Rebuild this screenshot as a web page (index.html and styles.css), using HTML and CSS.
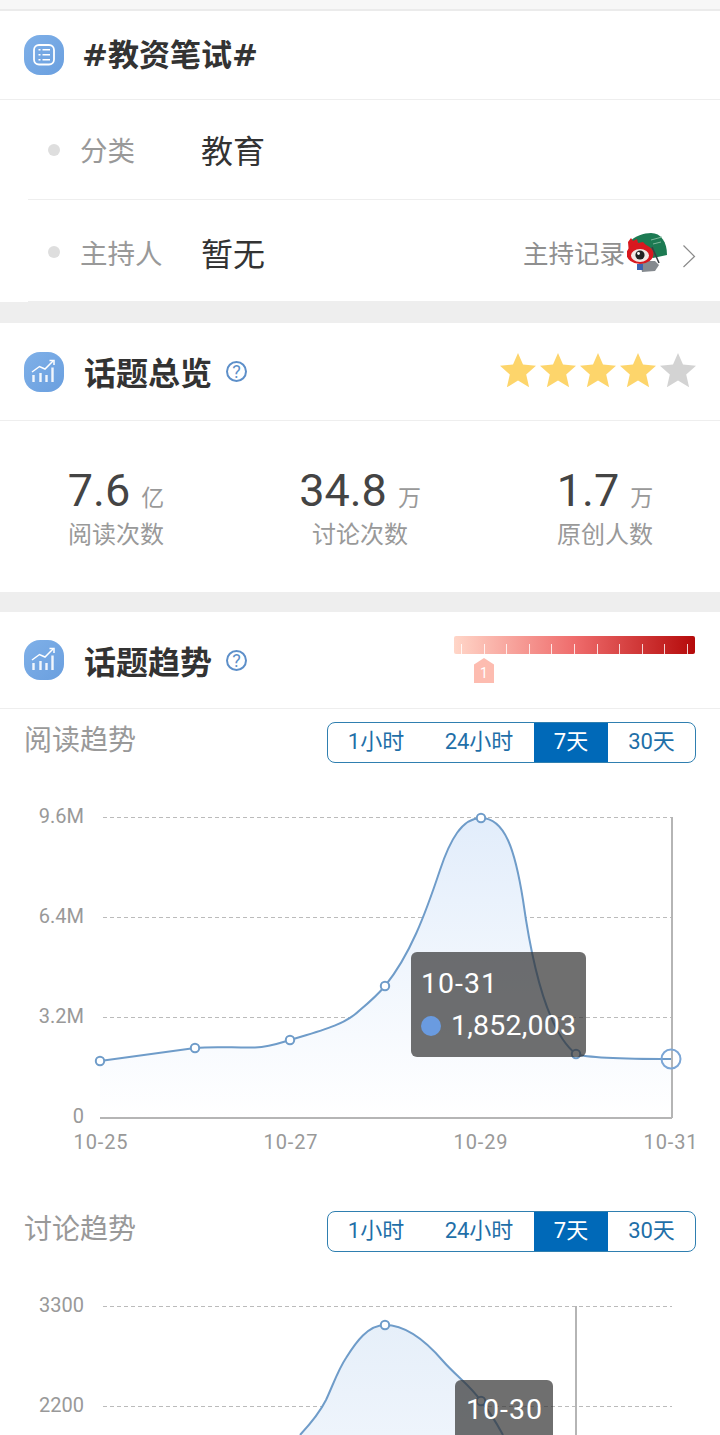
FILE: index.html
```html
<!DOCTYPE html>
<html lang="zh-CN">
<head>
    <meta charset="UTF-8">
    <meta name="viewport" content="width=device-width, initial-scale=1.0">
    <title>#教资笔试#</title>
    <link rel="stylesheet" href="styles.css">
</head>
<body>
    <div class="page">
        <div class="top-strip"></div>

        <div class="section-head topic-head">
            <span class="head-icon">
                <svg viewBox="0 0 40 40" width="40" height="40">
                    <rect x="10" y="10" width="20" height="19.500" rx="5" fill="none" stroke="#fff" stroke-width="1.800"/>
                    <path d="M14.500 14.800h2M14.500 19.800h2M14.500 24.800h2M18.500 14.800h7.500M18.500 19.800h7.500M18.500 24.800h7.500" stroke="#fff" stroke-width="1.600" fill="none"/>
                </svg>
            </span>
            <h1 class="topic-title">#教资笔试#</h1>
        </div>

        <div class="info-row row-first">
            <span class="dot"></span>
            <span class="info-label">分类</span>
            <span class="info-value">教育</span>
        </div>
        <div class="info-row row-second">
            <span class="dot"></span>
            <span class="info-label">主持人</span>
            <span class="info-value">暂无</span>
            <span class="host-log">主持记录</span>
            <svg class="avatar" viewBox="0 0 40 40" width="40" height="40">
                <path d="M2 9C8 3 17 0 24 0c10 0 16 9 16 22l-14 3z" fill="#1c7a52"/>
                <path d="M24 7l11-3M26 11l8-2" stroke="#7fb89c" stroke-width="1" fill="none"/>
                <path d="M25 14l7 16" stroke="#3a3f44" stroke-width="1.500" fill="none"/>
                <path d="M13 28l15 0 4 4-4 6-13 1z" fill="#858a8f"/>
                <path d="M10 31h6v6h-6z" fill="#3c62b0"/>
                <path d="M1 9l3-4 2 3 4-2 1 4 5-1 6 6-8 6H2z" fill="#d8181f"/>
                <ellipse cx="13" cy="21" rx="13.500" ry="10" fill="#d8181f"/>
                <ellipse cx="13" cy="22.500" rx="9" ry="6.500" fill="#f3e9e6"/>
                <circle cx="13" cy="22" r="4.600" fill="#222"/>
                <circle cx="11.500" cy="20.500" r="1.400" fill="#fff"/>
            </svg>
            <svg class="chevron" viewBox="0 0 14 24" width="14" height="24">
                <path d="M1.500 1.500L12.500 12.500 1.500 23" fill="none" stroke="#8a8a8a" stroke-width="1.200"/>
            </svg>
        </div>

        <div class="band band-info"></div>

        <div class="section-head overview-head">
            <span class="head-icon">
                <svg viewBox="0 0 40 40" width="40" height="40">
                    <path d="M8 20l7.500-5.500L21 17l8-8" fill="none" stroke="#fff" stroke-width="1.500"/>
                    <path d="M25.500 8.500H30V13" fill="none" stroke="#fff" stroke-width="1.500"/>
                    <path d="M9.500 23v7M16.500 21v9M22.500 23v7M28.500 15.500V30" stroke="#fff" stroke-width="2.400" opacity=".9"/>
                </svg>
            </span>
            <h2 class="section-title">话题总览</h2>
            <span class="help">?</span>
            <div class="stars">
                <svg viewBox="0 0 196 40" width="196" height="40">
                    <defs>
                        <path id="star" d="M18 1l5 11.500 13 1.300-9.800 8.700 2.900 12.800L18 28.600 6.900 35.300l2.900-12.800L0 13.800l13-1.300z"/>
                    </defs>
                    <use href="#star" x="0" y="0" fill="#fdd56b"/>
                    <use href="#star" x="40" y="0" fill="#fdd56b"/>
                    <use href="#star" x="80" y="0" fill="#fdd56b"/>
                    <use href="#star" x="120" y="0" fill="#fdd56b"/>
                    <use href="#star" x="160" y="0" fill="#d3d3d3"/>
                </svg>
            </div>
        </div>

        <div class="stats">
            <div class="stat stat-read">
                <div class="stat-num">7.6<span class="stat-unit">亿</span></div>
                <div class="stat-name">阅读次数</div>
            </div>
            <div class="stat stat-talk">
                <div class="stat-num">34.8<span class="stat-unit">万</span></div>
                <div class="stat-name">讨论次数</div>
            </div>
            <div class="stat stat-user">
                <div class="stat-num">1.7<span class="stat-unit">万</span></div>
                <div class="stat-name">原创人数</div>
            </div>
        </div>

        <div class="band"></div>

        <div class="section-head trend-head">
            <span class="head-icon">
                <svg viewBox="0 0 40 40" width="40" height="40">
                    <path d="M8 20l7.500-5.500L21 17l8-8" fill="none" stroke="#fff" stroke-width="1.500"/>
                    <path d="M25.500 8.500H30V13" fill="none" stroke="#fff" stroke-width="1.500"/>
                    <path d="M9.500 23v7M16.500 21v9M22.500 23v7M28.500 15.500V30" stroke="#fff" stroke-width="2.400" opacity=".9"/>
                </svg>
            </span>
            <h2 class="section-title">话题趋势</h2>
            <span class="help">?</span>
            <div class="heat">
                <div class="heat-bar">
                    <i></i><i></i><i></i><i></i><i></i><i></i><i></i><i></i><i></i><i></i><i></i>
                </div>
                <div class="heat-tag">1</div>
            </div>
        </div>

        <div class="chart-head">
            <span class="chart-title">阅读趋势</span>
            <div class="segment">
                <span class="seg seg-1h">1小时</span>
                <span class="seg seg-24h">24小时</span>
                <span class="seg seg-7d on">7天</span>
                <span class="seg seg-30d">30天</span>
            </div>
        </div>

        <div class="chart chart-read">
            <svg viewBox="0 770 720 400" width="720" height="400">
                <defs>
                    <linearGradient id="fillRead" x1="0" y1="0" x2="0" y2="1">
                        <stop offset="0" stop-color="#e2edfb"/>
                        <stop offset="1" stop-color="#ffffff"/>
                    </linearGradient>
                </defs>
                <g class="grid">
                    <line x1="103" y1="817.500" x2="672" y2="817.500"/>
                    <line x1="103" y1="917.500" x2="672" y2="917.500"/>
                    <line x1="103" y1="1017.500" x2="672" y2="1017.500"/>
                </g>
                <path fill="url(#fillRead)" d="M100 1061L195 1048C215 1046 235 1048 255 1047.500C270 1047 280 1043 290 1040C320 1031 345 1025 360 1010C372 1000 380 992 385 986C410 955 425 915 440 870C450 840 462 818 481 818C505 818 515 850 523 900C530 950 545 1030 576 1054C590 1059 640 1059 671 1059L671 1118L100 1118Z"/>
                <line class="axis" x1="100" y1="1118" x2="672" y2="1118"/>
                <line class="axis" x1="672" y1="817" x2="672" y2="1118"/>
                <path class="curve" d="M100 1061L195 1048C215 1046 235 1048 255 1047.500C270 1047 280 1043 290 1040C320 1031 345 1025 360 1010C372 1000 380 992 385 986C410 955 425 915 440 870C450 840 462 818 481 818C505 818 515 850 523 900C530 950 545 1030 576 1054C590 1059 640 1059 671 1059"/>
                <circle class="pt" cx="100" cy="1061" r="4.200"/>
                <circle class="pt" cx="195" cy="1048" r="4.200"/>
                <circle class="pt" cx="290" cy="1040" r="4.200"/>
                <circle class="pt" cx="385" cy="986" r="4.200"/>
                <circle class="pt" cx="481" cy="818" r="4.200"/>
                <circle class="pt" cx="576" cy="1054" r="4.200"/>
                <circle class="pt pt-big" cx="671" cy="1059" r="9.500"/>
                <g class="ylabels">
                    <text x="84" y="823">9.6M</text>
                    <text x="84" y="923">6.4M</text>
                    <text x="84" y="1023">3.2M</text>
                    <text x="84" y="1123">0</text>
                </g>
                <g class="xlabels">
                    <text x="101" y="1149">10-25</text>
                    <text x="291" y="1149">10-27</text>
                    <text x="481" y="1149">10-29</text>
                    <text x="671" y="1149">10-31</text>
                </g>
            </svg>
            <div class="tip tip-read">
                <div class="tip-date">10-31</div>
                <div class="tip-value"><span class="tip-dot"></span>1,852,003</div>
            </div>
        </div>

        <div class="chart-head">
            <span class="chart-title">讨论趋势</span>
            <div class="segment">
                <span class="seg seg-1h">1小时</span>
                <span class="seg seg-24h">24小时</span>
                <span class="seg seg-7d on">7天</span>
                <span class="seg seg-30d">30天</span>
            </div>
        </div>

        <div class="chart chart-talk">
            <svg viewBox="0 1259 720 176" width="720" height="176">
                <defs>
                    <linearGradient id="fillTalk" x1="0" y1="0" x2="0" y2="1">
                        <stop offset="0" stop-color="#e6eff9"/>
                        <stop offset="1" stop-color="#eef4fc"/>
                    </linearGradient>
                </defs>
                <g class="grid">
                    <line x1="103" y1="1306.500" x2="672" y2="1306.500"/>
                    <line x1="103" y1="1406.500" x2="672" y2="1406.500"/>
                </g>
                <path fill="url(#fillTalk)" d="M300 1435C312 1422 320 1412 326 1400C333 1385 338 1370 346 1358C356 1342 368 1325 385 1325C405 1325 425 1340 443 1361C456 1376 470 1385 481 1401C490 1412 496 1422 503 1435Z"/>
                <line class="axis" x1="576" y1="1306" x2="576" y2="1435"/>
                <path class="curve" d="M300 1435C312 1422 320 1412 326 1400C333 1385 338 1370 346 1358C356 1342 368 1325 385 1325C405 1325 425 1340 443 1361C456 1376 470 1385 481 1401C490 1412 496 1422 503 1435"/>
                <circle class="pt" cx="385" cy="1325" r="4.200"/>
                <circle class="pt" cx="481" cy="1401" r="4.200"/>
                <g class="ylabels">
                    <text x="84" y="1312">3300</text>
                    <text x="84" y="1412">2200</text>
                </g>
            </svg>
            <div class="tip tip-talk">
                <div class="tip-date">10-30</div>
            </div>
        </div>
    </div>
</body>
</html>
```

FILE: styles.css
```css
* {
    margin: 0;
    padding: 0;
    box-sizing: border-box;
}

html, body {
    background: white;
    overflow: hidden;
}

body {
    font-family: Roboto, "Noto Sans CJK SC", sans-serif;
    color: #333;
}

.page {
    width: 720px;
    height: 1435px;
    overflow: hidden;
}

.top-strip {
    height: 11px;
    background: #f7f7f7;
    border-bottom: 2px solid #ebebeb;
}

.section-head {
    display: flex;
    align-items: center;
    padding: 0 24px;
    border-bottom: 1px solid #eee;
}

.topic-head {
    height: 89px;
}

.overview-head {
    height: 98px;
}

.trend-head {
    height: 97px;
}

.head-icon {
    width: 40px;
    height: 40px;
    border-radius: 16px;
    background: linear-gradient(135deg, #7fb0e8 0%, #6a9fdf 100%);
    flex: none;
    display: block;
}

.head-icon svg {
    display: block;
}

.topic-title {
    margin-left: 18px;
    font-family: "DejaVu Sans", "Noto Sans CJK SC", sans-serif;
    font-size: 31px;
    line-height: 40px;
    font-weight: 700;
    color: #333;
}

.section-title {
    margin-left: 20px;
    padding-top: 5px;
    font-size: 32px;
    line-height: 40px;
    font-weight: 700;
    color: #333;
}

.help {
    margin-left: 14px;
    width: 21px;
    height: 21px;
    border: 2px solid #5d8fc9;
    border-radius: 50%;
    color: #5d8fc9;
    font-size: 18px;
    line-height: 17px;
    text-align: center;
}

.stars {
    margin-left: auto;
    height: 40px;
}

.info-row {
    display: flex;
    align-items: center;
    margin-left: 28px;
    padding-left: 20px;
    border-bottom: 1px solid #eee;
}

.row-first {
    height: 100px;
    padding-bottom: 2px;
}

.row-first .dot {
    margin-top: 2px;
}

.row-second {
    height: 102px;
    padding-top: 2px;
}

.dot {
    width: 12px;
    height: 12px;
    border-radius: 50%;
    background: #dedede;
    flex: none;
}

.info-label {
    margin-left: 20px;
    width: 121px;
    font-size: 27.500px;
    color: #999;
}

.info-value {
    font-size: 32px;
    color: #333;
}

.host-log {
    margin-left: auto;
    font-size: 25.500px;
    color: #8f8f8f;
}

.avatar {
    margin-left: 2px;
    margin-top: 2px;
    flex: none;
}

.chevron {
    margin-left: 15px;
    margin-right: 24px;
    margin-top: 8px;
    flex: none;
}

.band {
    height: 20px;
    background: #eee;
}

.band-info {
    height: 21px;
}

.stats {
    height: 171px;
    display: grid;
    grid-template-columns: 232px 256px 232px;
    padding-top: 47px;
}

.stat {
    text-align: center;
}

.stat-user {
    padding-left: 2px;
}

.stat-num {
    font-size: 45px;
    line-height: 46px;
    color: #444;
}

.stat-unit {
    margin-left: 11px;
    font-size: 23px;
    color: #999;
}

.stat-name {
    font-size: 24px;
    line-height: 26px;
    color: #999;
}

.heat {
    margin-left: auto;
    margin-right: 1px;
    margin-top: 12px;
    width: 241px;
    height: 60px;
}

.heat-bar {
    height: 18px;
    border-radius: 2px;
    background: linear-gradient(90deg, #ffd6c8 0%, #ef6c6c 50%, #b50a0a 100%);
    display: flex;
    justify-content: space-between;
    align-items: flex-end;
    padding: 0 7px;
}

.heat-bar i {
    width: 1px;
    height: 10px;
    background: rgba(255, 255, 255, .8);
}

.heat-tag {
    margin-top: 4px;
    margin-left: 20px;
    width: 20px;
    height: 25px;
    background: #fdbcb0;
    clip-path: polygon(50% 0, 100% 26%, 100% 100%, 0 100%, 0 26%);
    color: #fff;
    font-size: 14px;
    line-height: 30px;
    text-align: center;
}

.chart-head {
    height: 61px;
    display: flex;
    align-items: flex-start;
    justify-content: space-between;
    padding: 13px 24px 0;
}

.chart-title {
    margin-top: 1px;
    font-size: 28px;
    line-height: 36px;
    color: #999;
}

.segment {
    display: flex;
    width: 369px;
    height: 41px;
    border: 1px solid #2f7fb0;
    border-radius: 8px;
    overflow: hidden;
    font-size: 22px;
    line-height: 37px;
    color: #1f6fa8;
    text-align: center;
}

.seg-1h {
    width: 96px;
}

.seg-24h {
    width: 110px;
}

.seg-7d {
    width: 74px;
}

.seg-30d {
    flex: 1;
}

.seg.on {
    background: #0069b8;
    color: #fff;
}

.chart {
    position: relative;
}

.chart svg {
    display: block;
}

.chart-read {
    height: 428px;
}

.grid line {
    stroke: #bbb;
    stroke-width: 1;
    stroke-dasharray: 4 3;
}

.axis {
    stroke: #b5b5b5;
    stroke-width: 2;
}

.curve {
    fill: none;
    stroke: #6f9cc9;
    stroke-width: 2;
}

.pt {
    fill: white;
    stroke: #6f9cc9;
    stroke-width: 2;
}

.pt-big {
    fill: none;
    stroke: #7ba6d6;
    stroke-width: 2;
}

.ylabels text {
    text-anchor: end;
    font-size: 20px;
    fill: #999;
}

.xlabels text {
    text-anchor: middle;
    font-size: 20px;
    letter-spacing: .9px;
    fill: #999;
}

.tip {
    position: absolute;
    background: rgba(50, 50, 50, .7);
    border-radius: 6px;
    color: white;
    font-size: 28.500px;
}

.tip-read {
    left: 411px;
    top: 182px;
    width: 175px;
    height: 105px;
    padding: 12px 10px 0;
}

.tip-talk {
    left: 455px;
    top: 121px;
    width: 98px;
    height: 70px;
    padding: 12px 11px 0;
}

.tip-date {
    line-height: 36px;
    letter-spacing: 1px;
    white-space: nowrap;
}

.tip-read .tip-date {
    line-height: 40px;
}

.tip-value {
    display: flex;
    align-items: center;
    line-height: 43px;
    letter-spacing: .2px;
    white-space: nowrap;
}

.tip-dot {
    width: 20px;
    height: 20px;
    border-radius: 50%;
    background: #6a9be0;
    margin-right: 10px;
    flex: none;
}
```
